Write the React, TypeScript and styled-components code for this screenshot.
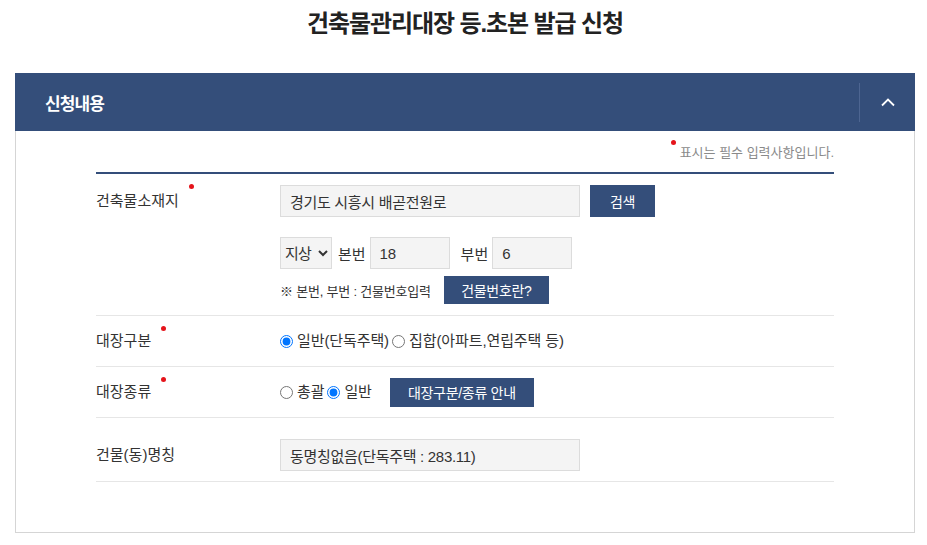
import React from 'react';
import styled, {createGlobalStyle} from 'styled-components';

const navy = '#344e7a';

const GlobalStyle = createGlobalStyle`
	html, body {
		margin: 0;
		padding: 0;
		background: #fff;
	}
	body {
		font-family: 'Liberation Sans', 'Noto Sans CJK KR', sans-serif;
		color: #333;
	}
	* {
		box-sizing: border-box;
	}
`;

const Page = styled.div`
	width: 927px;
	padding: 0 12px 0 15px;
`;

const Title = styled.h1`
	margin: 0 0 25px;
	height: 48px;
	line-height: 48px;
	text-align: center;
	font-size: 24px;
	font-weight: 700;
	letter-spacing: -1.1px;
	color: #222;
`;

const Panel = styled.section`
	width: 900px;
	border: 1px solid #d5d5d5;
	border-top: none;
`;

const PanelHeader = styled.header`
	display: flex;
	align-items: center;
	height: 58px;
	margin: 0 -1px;
	background: ${navy};
	color: #fff;
`;

const PanelTitle = styled.h2`
	flex: 1;
	margin: 0;
	padding-left: 30px;
	font-size: 17px;
	font-weight: 700;
	letter-spacing: -0.9px;
`;

const ToggleButton = styled.button`
	display: flex;
	align-items: center;
	justify-content: center;
	width: 56px;
	height: 39px;
	padding: 0;
	border: none;
	border-left: 1px solid #4d6591;
	background: transparent;
	cursor: pointer;
`;

const PanelBody = styled.div`
	padding: 13px 80px 50px;
`;

const RequiredNote = styled.p`
	margin: 0 0 10px;
	text-align: right;
	font-size: 13px;
	line-height: 18px;
	color: #8a8a8a;
`;

const Dot = styled.span<{$top: number; $left: number}>`
	position: absolute;
	top: ${({$top}) => $top}px;
	left: ${({$left}) => $left}px;
	width: 5px;
	height: 5px;
	border-radius: 50%;
	background: #e5141b;
`;

const NoteMark = styled.span`
	position: relative;
	display: inline-block;
	width: 9px;
	height: 10px;
`;

const FormTable = styled.div`
	border-top: 2px solid ${navy};
`;

const Row = styled.div<{$pad: string; $align: string}>`
	display: grid;
	grid-template-columns: 184px 1fr;
	align-items: ${({$align}) => $align};
	padding: ${({$pad}) => $pad};
	border-bottom: 1px solid #e6e6e6;
`;

const Label = styled.span<{$required?: boolean}>`
	position: relative;
	justify-self: start;
	font-size: 15px;
	line-height: 32px;
	color: #333;
	padding-right: ${({$required}) => ($required ? '14px' : '0')};
`;

const Field = styled.div`
	display: flex;
	flex-direction: column;
	align-items: flex-start;
`;

const Line = styled.div<{$gap?: number; $mt?: number}>`
	display: flex;
	align-items: center;
	gap: ${({$gap}) => $gap ?? 0}px;
	margin-top: ${({$mt}) => $mt ?? 0}px;
`;

const TextBox = styled.input<{$w: number}>`
	width: ${({$w}) => $w}px;
	height: 32px;
	padding: 0 9px;
	border: 1px solid #dcdcdc;
	background: #f4f4f4;
	font-family: inherit;
	font-size: 15px;
	letter-spacing: -0.3px;
	color: #333;
	outline: none;
`;

const Select = styled.select`
	width: 52px;
	height: 32px;
	padding: 0;
	border: 1px solid #dcdcdc;
	border-radius: 0;
	background: #f4f4f4;
	font-family: inherit;
	font-size: 15px;
	letter-spacing: -0.8px;
	color: #333;
`;

const InlineText = styled.span<{$ml?: number}>`
	margin: 0 4px 0 ${({$ml}) => $ml ?? 6}px;
	font-size: 15px;
	color: #333;
`;

const Button = styled.button<{$w: number; $h: number; $ml?: number}>`
	width: ${({$w}) => $w}px;
	height: ${({$h}) => $h}px;
	margin-left: ${({$ml}) => $ml ?? 0}px;
	padding: 0;
	border: none;
	background: ${navy};
	color: #fff;
	font-family: inherit;
	font-size: 14px;
	letter-spacing: -0.3px;
	cursor: pointer;
`;

const Hint = styled.span`
	font-size: 13px;
	letter-spacing: -0.2px;
	color: #333;
	margin-right: 13px;
`;

const RadioLabel = styled.label`
	display: inline-flex;
	align-items: center;
	font-size: 15px;
	line-height: 20px;
	letter-spacing: -0.1px;
	color: #333;
	margin-right: 3px;
	input {
		width: 13px;
		height: 13px;
		margin: 0 4px 0 0;
	}
`;

const ChevronUp = () => (
	<svg width="16" height="10" viewBox="0 0 16 10">
		<polyline points="2,8.5 8,2.5 14,8.5" fill="none" stroke="#fff" strokeWidth="1.8" />
	</svg>
);

export default function App() {
	return (
		<Page>
			<GlobalStyle />
			<Title>건축물관리대장 등.초본 발급 신청</Title>
			<Panel>
				<PanelHeader>
					<PanelTitle>신청내용</PanelTitle>
					<ToggleButton aria-label="접기">
						<ChevronUp />
					</ToggleButton>
				</PanelHeader>
				<PanelBody>
					<RequiredNote>
						<NoteMark>
							<Dot $top={-7} $left={0} />
						</NoteMark>
						표시는 필수 입력사항입니다.
					</RequiredNote>
					<FormTable>
						<Row $pad="11px 0 11px" $align="start">
							<Label $required>
								건축물소재지
								<Dot $top={-1} $left={93} />
							</Label>
							<Field>
								<Line $gap={10}>
									<TextBox $w={300} readOnly value="경기도 시흥시 배곧전원로" />
									<Button $w={65} $h={32}>검색</Button>
								</Line>
								<Line $mt={20}>
									<Select defaultValue="지상">
										<option>지상</option>
										<option>지하</option>
									</Select>
									<InlineText>본번</InlineText>
									<TextBox $w={80} readOnly value="18" />
									<InlineText $ml={11}>부번</InlineText>
									<TextBox $w={80} readOnly value="6" />
								</Line>
								<Line $mt={7}>
									<Hint>※ 본번, 부번 : 건물번호입력</Hint>
									<Button $w={105} $h={28}>건물번호란?</Button>
								</Line>
							</Field>
						</Row>
						<Row $pad="9px 0 9px" $align="center">
							<Label $required>
								대장구분
								<Dot $top={1} $left={65} />
							</Label>
							<Line>
								<RadioLabel>
									<input type="radio" name="kind" defaultChecked />
									일반(단독주택)
								</RadioLabel>
								<RadioLabel>
									<input type="radio" name="kind" />
									집합(아파트,연립주택 등)
								</RadioLabel>
							</Line>
						</Row>
						<Row $pad="9px 0 9px" $align="center">
							<Label $required>
								대장종류
								<Dot $top={1} $left={65} />
							</Label>
							<Line>
								<RadioLabel>
									<input type="radio" name="type" />
									총괄
								</RadioLabel>
								<RadioLabel>
									<input type="radio" name="type" defaultChecked />
									일반
								</RadioLabel>
								<Button $w={144} $h={29} $ml={15}>
									대장구분/종류 안내
								</Button>
							</Line>
						</Row>
						<Row $pad="21px 0 10px" $align="center">
							<Label>건물(동)명칭</Label>
							<Line>
								<TextBox $w={300} readOnly value="동명칭없음(단독주택 : 283.11)" />
							</Line>
						</Row>
					</FormTable>
				</PanelBody>
			</Panel>
		</Page>
	);
}
